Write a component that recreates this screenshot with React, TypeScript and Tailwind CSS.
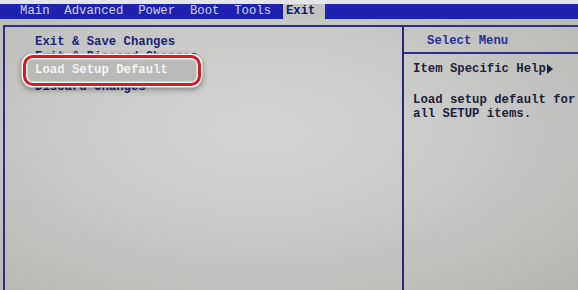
export default function App() {
  const tabs = ['Main', 'Advanced', 'Power', 'Boot', 'Tools']
  const mono = { fontFamily: '"Liberation Mono", "DejaVu Sans Mono", monospace' }

  return (
    <div
      className="relative w-[578px] h-[290px] overflow-hidden bg-[radial-gradient(ellipse_at_45%_45%,#d2d3d2_0%,#c9cac8_45%,#b4b5b0_100%)] text-[12.3px] leading-none font-bold"
      style={mono}
    >
      <div className="h-[4px] bg-[#e4e5e6]" />
      <div className="flex h-[15px] bg-[#1f22ae] pl-[20px] items-center whitespace-pre">
        {tabs.map((t) => (
          <span key={t} className="text-[#cfd3ee] font-normal pr-[14.8px]">
            {t}
          </span>
        ))}
        <span className="-ml-[3px] h-full flex items-center px-[3px] w-[42px] bg-[#c3c4c2] text-[#141a6e]">Exit</span>
      </div>
      <div className="h-[6px]" />
      <div className="ml-[3px] flex h-full border-t-2 border-l-2 border-[#2c2f8a]">
        <div className="w-[397px] flex flex-col pt-[9px] pl-[30px] gap-[3px] text-[#1b2478]">
          <div className="h-[12px]">Exit &amp; Save Changes</div>
          <div className="h-[12px]">Exit &amp; Discard Changes</div>
          <div className="h-[12px]">Load Setup Default</div>
          <div className="h-[12px]">Discard Changes</div>
        </div>
        <div className="flex-1 flex flex-col border-l-2 border-[#27297f]">
          <div className="h-[27px] border-b-2 border-[#2c2f8a] pl-[23px] pt-[8px] text-[#2a2f9c]">Select Menu</div>
          <div className="pl-[9px] pt-[9px] text-[#1d1f3c]">
            <div className="flex items-center">
              Item Specific Help
              <span className="ml-[1px] w-0 h-0 border-y-[5px] border-y-transparent border-l-[6px] border-l-[#1d1f3c]" />
            </div>
            <div className="mt-[18px] leading-[14px]">
              Load setup default for
              <br />
              all SETUP items.
            </div>
          </div>
        </div>
      </div>

      {/* highlighted entry */}
      <div className="absolute left-[23px] top-[55px] w-[178px] h-[31px] rounded-[10px] border-[3px] border-[#c8222a] shadow-[0_0_0_1.5px_#f4f4f4,0_2px_5px_2px_rgba(0,0,0,0.35),inset_0_0_0_1.5px_#f0f0f0] bg-[#b9bab8] flex items-center pl-[9px] text-[#f2f2f2]">
        Load Setup Default
      </div>
    </div>
  )
}
